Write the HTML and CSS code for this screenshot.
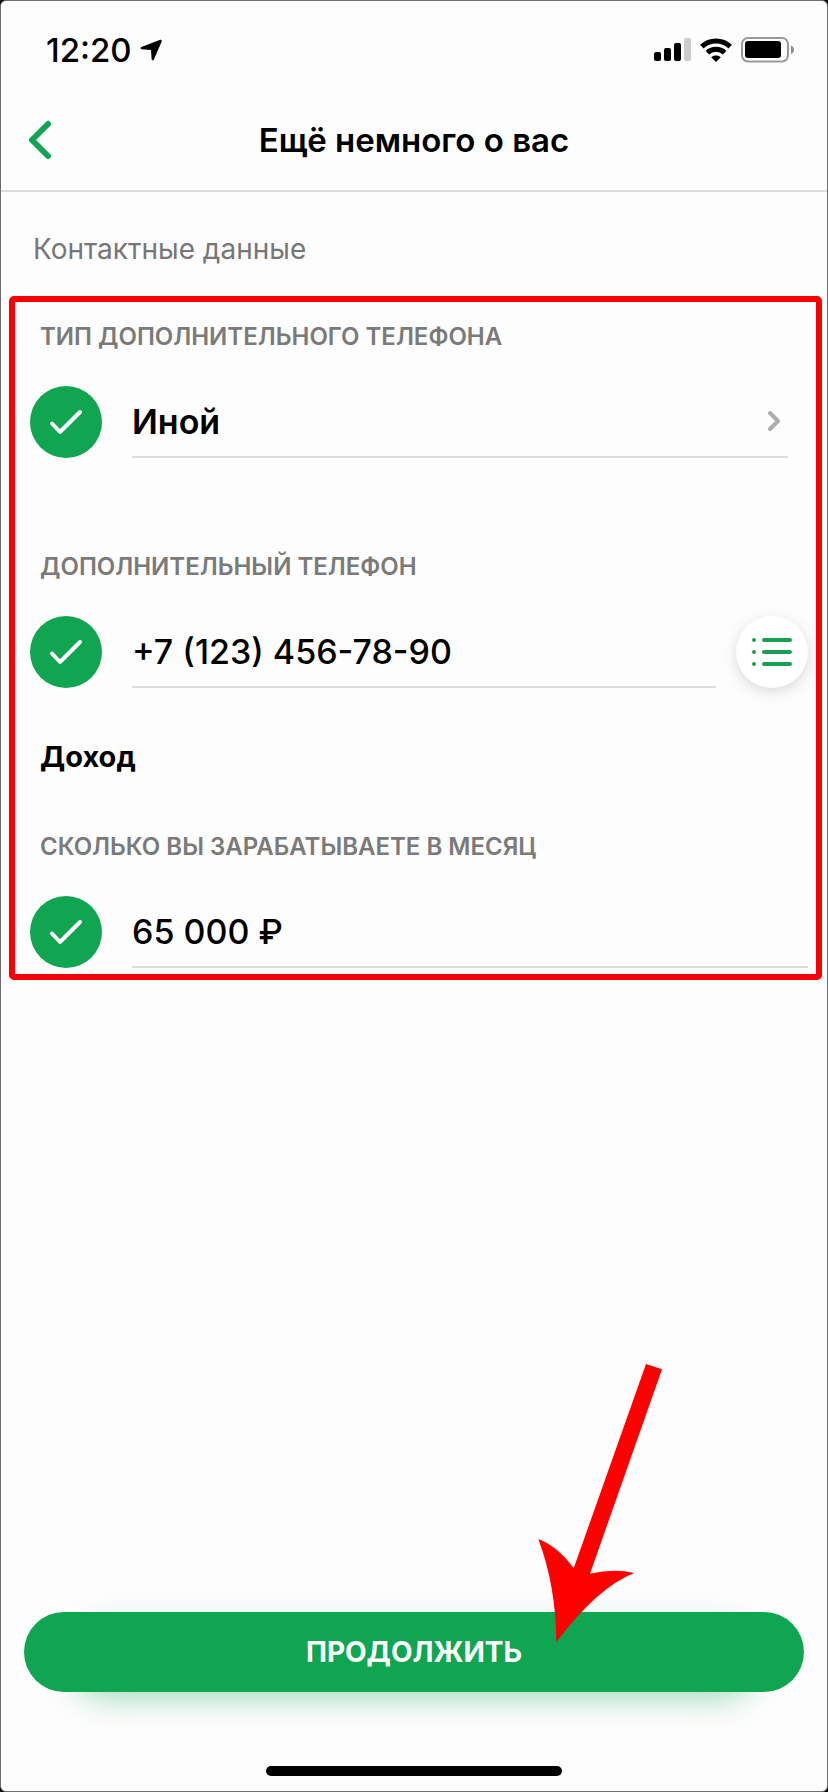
FILE: index.html
```html
<!DOCTYPE html>
<html lang="ru">
<head>
<meta charset="utf-8">
<meta name="viewport" content="width=device-width, initial-scale=1">
<title>Ещё немного о вас</title>
<link rel="stylesheet" href="styles.css">
</head>
<body>
<div class="screen">
  <div class="status">
    <div class="status-left">
      <span class="clock">12:20</span>
      <svg class="location" width="22" height="22" viewBox="0 0 22 22" aria-hidden="true"><path d="M19.600 1 1.400 8c-1.200.5-1.100 2 .2 2.200L11 11l.6 9c.1 1.500 1.700 1.700 2.300.4L21.600 2.800C22.100 1.500 21 .5 19.600 1z"/></svg>
    </div>
    <div class="status-right">
      <svg width="38" height="24" viewBox="0 0 38 24" aria-hidden="true">
        <rect x="1" y="14" width="7" height="9" rx="2"/>
        <rect x="11" y="10" width="7" height="13" rx="2"/>
        <rect x="21" y="5" width="7" height="18" rx="2"/>
        <rect x="31" y="0" width="7" height="23" rx="2" fill="#ccc"/>
      </svg>
      <svg width="32" height="24" viewBox="0 0 32 24" aria-hidden="true">
        <g fill="none" stroke="#000" stroke-width="5">
          <path d="M1.800 8.600a20.500 20.500 0 0 1 28.400 0"/>
          <path d="M7.400 14.800a12.400 12.400 0 0 1 17.200 0"/>
        </g>
        <path d="M16 24 11.200 19.200c2.600-2.400 7-2.400 9.600 0z"/>
      </svg>
      <svg width="54" height="26" viewBox="0 0 54 26" aria-hidden="true">
        <rect x="1" y="1" width="46" height="23.500" rx="6" fill="none" stroke="#999" stroke-width="2"/>
        <rect x="4" y="4" width="36" height="17" rx="3"/>
        <path d="M50 8.500c4 1.500 4 7 0 8.500z" fill="#8c8c8c"/>
      </svg>
    </div>
  </div>

  <header class="header">
    <button class="back" type="button" aria-label="Назад">
      <svg width="24" height="40" viewBox="0 0 24 40" aria-hidden="true"><path d="M19 4 3 20l16 16" fill="none" stroke="#14a256" stroke-width="6" stroke-linecap="round" stroke-linejoin="round"/></svg>
    </button>
    <h1 class="title">Ещё немного о вас</h1>
  </header>

  <main class="content">
    <h2 class="section">Контактные данные</h2>
    <form class="group" id="details">
      <div class="field">
        <label class="label" for="phone-type">ТИП ДОПОЛНИТЕЛЬНОГО ТЕЛЕФОНА</label>
        <div class="row row-inset">
          <svg class="check" viewBox="0 0 72 72" aria-hidden="true"><path d="m22 37.500 8 8.500 20-20"/></svg>
          <div class="control">
            <select class="value strong" id="phone-type"><option>Иной</option></select>
            <svg class="chevron" width="16" height="24" viewBox="0 0 16 24" aria-hidden="true"><path d="m4 4 8 8-8 8"/></svg>
          </div>
        </div>
      </div>
      <div class="field">
        <label class="label" for="phone">ДОПОЛНИТЕЛЬНЫЙ ТЕЛЕФОН</label>
        <div class="row">
          <svg class="check" viewBox="0 0 72 72" aria-hidden="true"><path d="m22 37.500 8 8.500 20-20"/></svg>
          <div class="control">
            <input class="value" id="phone" type="tel" value="+7 (123) 456-78-90">
          </div>
          <button class="contacts" type="button" aria-label="Выбрать из контактов">
            <svg width="40" height="28" viewBox="0 0 40 28" aria-hidden="true"><path d="M12 2h26M12 14h26M12 26h26M2 2h0M2 14h0M2 26h0" fill="none" stroke="#1a9e54" stroke-width="4" stroke-linecap="round"/></svg>
          </button>
        </div>
      </div>
      <h2 class="subheading">Доход</h2>
      <div class="field">
        <label class="label" for="income">СКОЛЬКО ВЫ ЗАРАБАТЫВАЕТЕ В МЕСЯЦ</label>
        <div class="row">
          <svg class="check" viewBox="0 0 72 72" aria-hidden="true"><path d="m22 37.500 8 8.500 20-20"/></svg>
          <div class="control">
            <input class="value" id="income" type="text" value="65 000 ₽">
          </div>
        </div>
      </div>
    </form>
  </main>

  <footer class="footer">
    <button class="submit" type="submit" form="details">ПРОДОЛЖИТЬ</button>
    <svg class="pointer" width="128" height="280" viewBox="0 0 128 280" aria-hidden="true"><path d="M110 0l16 5.300L54 209.700Q78 204 98.300 209 62 223 20.300 278 20 222 2.300 175q19 7 35.400 29.300z"/></svg>
  </footer>
  <div class="home"></div>
</div>
</body>
</html>
```
FILE: styles.css
```css
* {
  box-sizing: border-box;
}

html {
  background: #000;
}

body {
  margin: 0;
  font-family: Inter, "Liberation Sans", sans-serif;
  color: #000;
}

button,
input,
select {
  margin: 0;
  padding: 0;
  border: 0;
  background: none;
  color: inherit;
  font: inherit;
}

svg {
  display: block;
  flex: none;
}

h1,
h2 {
  margin: 0;
}

.screen {
  display: flex;
  flex-direction: column;
  min-height: 100vh;
  border: 1px solid #6d6b6d;
  border-radius: 6px;
  background: #fdfdfd;
}

.status {
  display: flex;
  justify-content: space-between;
  align-items: center;
  padding: 29px 32px 20px 45px;
}

.status-left {
  display: flex;
  align-items: center;
  gap: 8px;
}

.status-right {
  display: flex;
  align-items: center;
  gap: 9px;
}

.clock {
  font-size: 33px;
  line-height: 40px;
  font-weight: 500;
}

.header {
  display: grid;
  grid-template-columns: 48px 1fr 48px;
  align-items: center;
  height: 102px;
  padding: 0 24px;
  border-bottom: 2px solid #dcdcdc;
}

.back {
  width: 32px;
  padding: 0 4px;
}

.title {
  font-size: 33px;
  line-height: 40px;
  font-weight: 600;
  text-align: center;
}

.content {
  flex: 1;
}

.section {
  padding: 40px 32px 30px;
  color: #767676;
  font-size: 28px;
  line-height: 34px;
  font-weight: 400;
}

.group {
  margin: 0 5px 0 8px;
  padding: 20px 8px 6px 15px;
  border: 6px solid #f90006;
  border-radius: 5px;
}

.field + .field {
  margin-top: 94px;
}

.label {
  display: block;
  margin-bottom: 34px;
  padding-left: 10px;
  color: #7a7a7a;
  font-size: 24px;
  line-height: 30px;
  font-weight: 600;
}

.row {
  display: flex;
}

.row-inset {
  padding-right: 20px;
}

.check {
  width: 72px;
  height: 72px;
  margin-right: 30px;
  border-radius: 50%;
  background: #0fa551;
  fill: none;
  stroke: #fff;
  stroke-width: 4;
  stroke-linecap: round;
  stroke-linejoin: round;
}

.control {
  display: flex;
  flex: 1;
  align-items: center;
  min-width: 0;
  padding-right: 6px;
  border-bottom: 2px solid #dcdcdc;
}

.value {
  flex: 1;
  min-width: 0;
  height: 70px;
  appearance: none;
  font-size: 34px;
  font-weight: 500;
  outline: none;
}

.strong {
  font-weight: 600;
}

.chevron {
  fill: none;
  stroke: #adadad;
  stroke-width: 4;
  stroke-linecap: round;
  stroke-linejoin: round;
}

.contacts {
  display: grid;
  place-items: center;
  width: 72px;
  height: 72px;
  margin-left: 20px;
  border-radius: 50%;
  background: #fff;
  box-shadow: 0 4px 14px rgba(0, 0, 0, 0.14);
}

.subheading {
  margin: 52px 0 58px;
  padding-left: 10px;
  font-size: 29px;
  line-height: 34px;
  font-weight: 700;
}

.footer {
  position: relative;
  margin: 0 23px;
}

.footer::before {
  content: "";
  position: absolute;
  inset: 16px 48px -6px;
  border-radius: 40px;
  background: #0fa551;
  filter: blur(16px);
  opacity: 0.4;
}

.submit {
  display: block;
  position: relative;
  width: 100%;
  height: 80px;
  border-radius: 40px;
  background: #0fa551;
  color: #fff;
  font-size: 28px;
  font-weight: 700;
}

.pointer {
  position: absolute;
  bottom: 48px;
  left: calc(50% + 122px);
  fill: #f00;
  pointer-events: none;
}

.home {
  width: 296px;
  height: 10px;
  margin: 74px auto 15px;
  border-radius: 5px;
  background: #000;
}
```
